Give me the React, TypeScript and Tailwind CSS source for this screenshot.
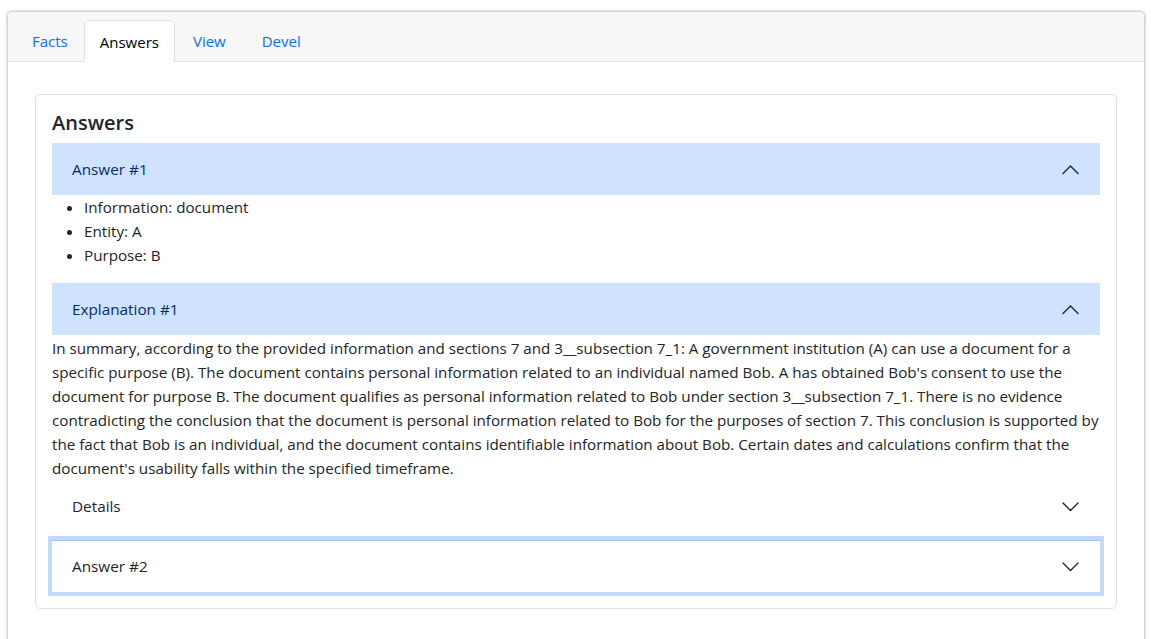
import React from "react"

const font = { fontFamily: '"Open Sans", "Noto Sans", sans-serif' }

function Chevron({ up }: { up?: boolean }) {
  return (
    <svg width="17" height="17" viewBox="0 0 17 17" fill="none" className="shrink-0">
      {up ? (
        <path d="M1 12.5 8.5 5l7.5 7.5" stroke="currentColor" strokeWidth="1.4" strokeLinecap="round" strokeLinejoin="round" />
      ) : (
        <path d="M1 5l7.5 7.5L16 5" stroke="currentColor" strokeWidth="1.4" strokeLinecap="round" strokeLinejoin="round" />
      )}
    </svg>
  )
}

function AccButton({ label, open, focus }: { label: string; open?: boolean; focus?: boolean }) {
  return (
    <button
      className={
        "flex h-[52px] w-full items-center justify-between pl-5 pr-[21px] text-left text-[15.3px] " +
        (open ? "bg-[#cfe2ff] text-[#052c65]" : "bg-white text-[#212529]") +
        (focus ? " border-t border-[#9ec5fe] outline-4 outline-[#c2d9fc]" : "")
      }
    >
      <span>{label}</span>
      <span className={open ? "text-[#052c65]" : "text-[#212529]"}>
        <Chevron up={open} />
      </span>
    </button>
  )
}

export default function App() {
  const tabs = ["Facts", "Answers", "View", "Devel"]

  return (
    <div className="min-h-screen bg-white pl-[7px] pr-[6px] pt-[11px] text-[#212529]" style={font}>
      <div className="rounded-[5px] border border-[#d4d4d4] shadow-[0_0_3px_rgba(0,0,0,0.25)]">
        <div className="flex h-[50px] items-end rounded-t-[5px] border-b border-[#dee2e6] bg-[#f7f7f7] pl-[8px]">
          {tabs.map((t) =>
            t === "Answers" ? (
              <div
                key={t}
                className="-mb-px flex h-[42px] items-center rounded-t-[5px] border border-b-0 border-[#dee2e6] bg-white px-[15px] pt-[2px] text-[15px] text-black"
              >
                {t}
              </div>
            ) : (
              <div
                key={t}
                className={
                  "flex h-[41px] items-center pt-[2px] text-[15px] text-[#0d6efd] " +
                  (t === "Facts" ? "px-[16px]" : "px-[18px]")
                }
              >
                {t}
              </div>
            )
          )}
        </div>

        <div className="px-[27px] pb-[40px] pt-[32px]">
          <div className="rounded-[5px] border border-[#dee2e6] p-4">
            <h5 className="mb-2 text-[20px] font-semibold leading-6">Answers</h5>

            <AccButton label="Answer #1" open />
            <ul className="mb-4 list-disc pl-8 text-[15.2px] leading-6">
              <li>Information: document</li>
              <li>Entity: A</li>
              <li>Purpose: B</li>
            </ul>

            <AccButton label="Explanation #1" open />
            <p className="pt-px text-[15.2px] leading-6">
              In summary, according to the provided information and sections 7 and 3__subsection 7_1: A government
              institution (A) can use a document for a specific purpose (B). The document contains personal information
              related to an individual named Bob. A has obtained Bob's consent to use the document for purpose B. The
              document qualifies as personal information related to Bob under section 3__subsection 7_1. There is no
              evidence contradicting the conclusion that the document is personal information related to Bob for the
              purposes of section 7. This conclusion is supported by the fact that Bob is an individual, and the document
              contains identifiable information about Bob. Certain dates and calculations confirm that the document's
              usability falls within the specified timeframe.
            </p>
            <AccButton label="Details" />

            <div className="mt-[8px]">
              <AccButton label="Answer #2" focus />
            </div>
          </div>
        </div>
      </div>
    </div>
  )
}
